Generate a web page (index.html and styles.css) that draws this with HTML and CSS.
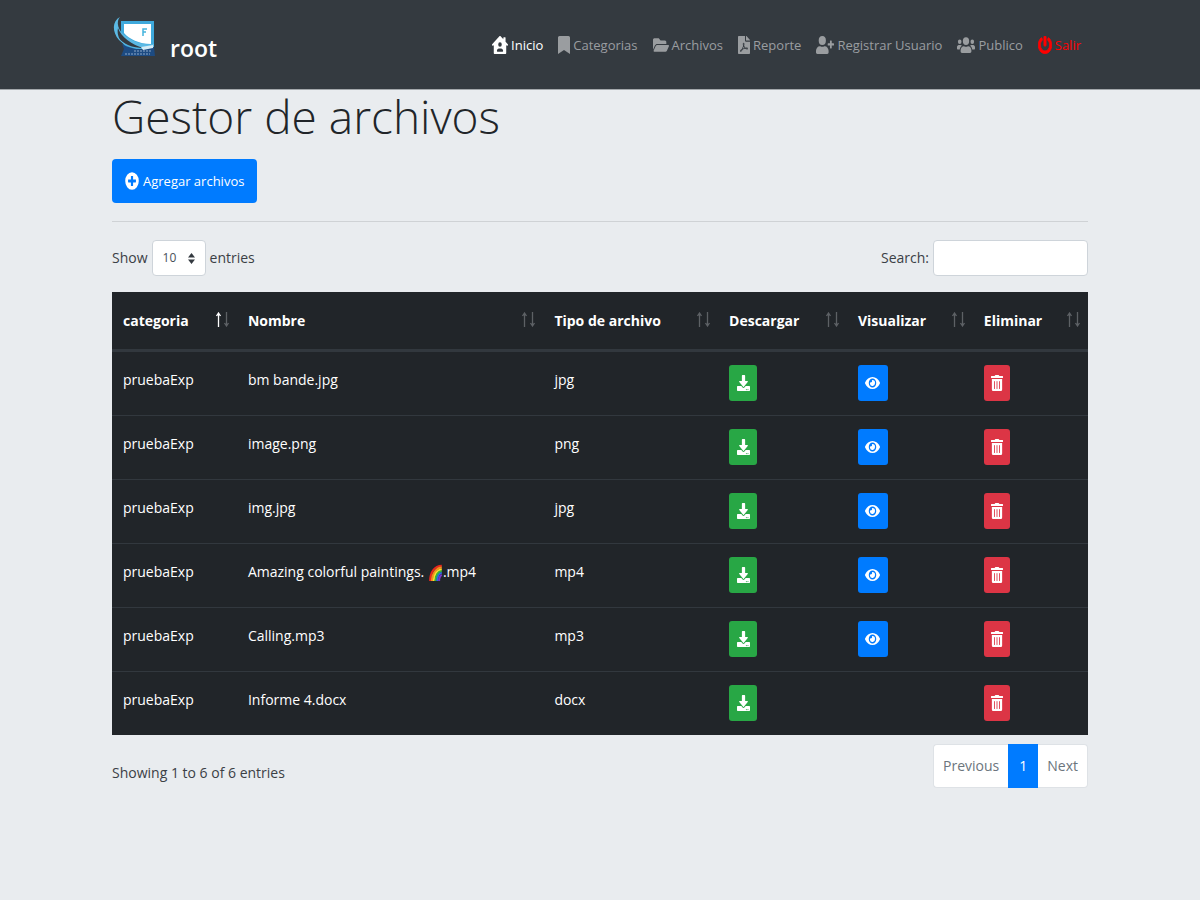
FILE: index.html
```
<!DOCTYPE html>
<html lang="es">
<head>
<meta charset="utf-8">
<title>Gestor de archivos</title>
<link rel="stylesheet" href="styles.css">
</head>
<body>
<svg class="sprite" aria-hidden="true">
  <symbol id="home" viewBox="0 0 576 512" preserveAspectRatio="none"><path fill-rule="evenodd" d="M570 236 488 162V48c0-9-7-16-16-16h-48c-9 0-16 7-16 16v41L310 8c-12-11-32-11-44 0L6 236c-8 8-8 18 0 26l10 12c7 8 18 8 25 1l23-20v225c0 18 14 32 32 32h384c18 0 32-14 32-32V255l23 20c7 7 18 7 25-1l10-12c8-8 8-18 0-26zM288 176a64 64 0 1 1 0 128 64 64 0 0 1 0-128zm90 272H198c-13 0-22-8-22-22 0-42 34-74 74-74h76c40 0 74 32 74 74 0 14-9 22-22 22z"/></symbol>
  <symbol id="bookmark" viewBox="0 0 384 512" preserveAspectRatio="none"><path d="M0 512V48C0 21.500 21.500 0 48 0h288c26.500 0 48 21.500 48 48v464L192 400 0 512z"/></symbol>
  <symbol id="folder" viewBox="0 0 576 512" preserveAspectRatio="none"><path d="M572.700 292.100L500.300 416.200A64 64 0 0 1 445 448H45c-18.500 0-30.100-20.100-20.700-36.100l72.400-124.100A64 64 0 0 1 152 256h400c18.500 0 30.100 20.100 20.700 36.100zM152 224h328v-48c0-26.500-21.500-48-48-48H272l-64-64H48C21.500 64 0 85.500 0 112v278l69.100-118.400C86.200 242.200 118 224 152 224z"/></symbol>
  <symbol id="pdf" viewBox="0 0 384 512" preserveAspectRatio="none"><path fill-rule="evenodd" d="M181.900 256.100c-5-16-4.900-46.900-2-46.900 8.400 0 7.600 36.900 2 46.900zm-1.700 47.200c-7.700 20.200-17.300 43.300-28.400 62.700 18.300-7 39-17.200 62.900-21.900-12.700-9.600-24.900-23.400-34.500-40.800zM86.100 428.100c0 .8 13.200-5.400 34.900-40.200-6.700 6.300-29.100 24.500-34.900 40.200zM248 160h136v328c0 13.300-10.700 24-24 24H24c-13.300 0-24-10.700-24-24V24C0 10.700 10.700 0 24 0h200v136c0 13.200 10.800 24 24 24zm-8 171.800c-20-12.200-33.300-29-42.700-53.800 4.500-18.500 11.600-46.600 6.200-64.200-4.700-29.400-42.400-26.500-47.800-6.800-5 18.300-.4 44.100 8.100 77-11.600 27.600-28.700 64.600-40.800 85.800-.1 0-.1.1-.2.1-27.100 13.900-73.600 44.500-54.500 68 5.600 6.900 16 10 21.500 10 17.900 0 35.700-18 61.100-61.800 25.800-8.500 54.100-19.100 79-23.200 21.700 11.800 47.100 19.500 64 19.500 29.200 0 31.200-32 19.700-43.400-13.900-13.600-54.300-9.700-73.600-7.200zM377 105L279 7c-4.500-4.500-10.600-7-17-7h-6v128h128v-6.100c0-6.300-2.500-12.400-7-16.900zm-74.100 255.300c4.100-2.700-2.500-11.900-42.800-9 37.100 15.800 42.800 9 42.800 9z"/></symbol>
  <symbol id="userplus" viewBox="0 0 640 512" preserveAspectRatio="none"><path d="M624 208h-64v-64c0-8.800-7.200-16-16-16h-32c-8.800 0-16 7.200-16 16v64h-64c-8.800 0-16 7.200-16 16v32c0 8.800 7.200 16 16 16h64v64c0 8.800 7.200 16 16 16h32c8.800 0 16-7.200 16-16v-64h64c8.800 0 16-7.200 16-16v-32c0-8.800-7.200-16-16-16zM224 256a128 128 0 1 0 0-256 128 128 0 0 0 0 256zm89.600 32h-16.700a174 174 0 0 1-145.800 0h-16.700C60.200 288 0 348.200 0 422.400V464c0 26.500 21.500 48 48 48h352c26.500 0 48-21.500 48-48v-41.600c0-74.200-60.200-134.400-134.400-134.400z"/></symbol>
  <symbol id="users" viewBox="0 0 640 512" preserveAspectRatio="none"><path d="M96 224a64 64 0 1 0 0-128 64 64 0 0 0 0 128zm448 0a64 64 0 1 0 0-128 64 64 0 0 0 0 128zm32 32h-64c-17.600 0-33.500 7.100-45.100 18.600 40.300 22.100 68.900 62 75.100 109.400h66c17.700 0 32-14.300 32-32v-32c0-35.300-28.700-64-64-64zm-256 0a112 112 0 1 0 0-224 112 112 0 0 0 0 224zm76.800 32h-8.300a157 157 0 0 1-137 0h-8.300C179.600 288 128 339.600 128 403.200V432c0 26.500 21.500 48 48 48h288c26.500 0 48-21.500 48-48v-28.800c0-63.600-51.600-115.200-115.200-115.200zm-223.700-13.400C161.500 263.100 145.600 256 128 256H64c-35.300 0-64 28.700-64 64v32c0 17.700 14.300 32 32 32h65.900c6.300-47.400 34.900-87.300 75.200-109.400z"/></symbol>
  <symbol id="power" viewBox="0 0 512 512" preserveAspectRatio="none"><path stroke="currentColor" stroke-width="24" d="M400 54.100c63 45 104 118.600 104 201.900 0 136.800-110.800 247.700-247.500 248C120 504.300 8.200 393 8 256.400 7.900 173.100 48.900 99.300 111.800 54.200c11.700-8.300 28-4.800 35 7.700L162.600 90c5.900 10.500 3.100 23.800-6.600 31-41.500 30.800-68 79.600-68 134.900-.1 92.300 74.500 168.100 168 168.100 91.600 0 168.600-74.200 168-169.100-.3-51.800-24.700-101.800-68.100-134-9.700-7.200-12.400-20.500-6.500-30.900l15.800-28.100c7-12.400 23.200-16.100 34.800-7.800zM296 264V24c0-13.300-10.700-24-24-24h-32c-13.300 0-24 10.700-24 24v240c0 13.300 10.700 24 24 24h32c13.300 0 24-10.700 24-24z"/></symbol>
  <symbol id="plus" viewBox="0 0 512 512" preserveAspectRatio="none"><path fill-rule="evenodd" d="M256 8a248 248 0 1 0 0 496 248 248 0 0 0 0-496zm144 276c0 6.600-5.400 12-12 12h-92v92c0 6.600-5.400 12-12 12h-56c-6.600 0-12-5.400-12-12v-92h-92c-6.600 0-12-5.400-12-12v-56c0-6.600 5.400-12 12-12h92v-92c0-6.600 5.400-12 12-12h56c6.600 0 12 5.400 12 12v92h92c6.600 0 12 5.400 12 12v56z"/></symbol>
  <symbol id="download" viewBox="0 0 512 512" preserveAspectRatio="none"><path fill-rule="evenodd" d="M216 0h80c13.300 0 24 10.700 24 24v168h87.700c17.800 0 26.700 21.500 14.100 34.100L269.700 378.300c-7.500 7.500-19.800 7.500-27.300 0L90.100 226.100c-12.600-12.600-3.700-34.100 14.100-34.100H192V24c0-13.300 10.700-24 24-24zm296 376v112c0 13.300-10.700 24-24 24H24c-13.300 0-24-10.700-24-24V376c0-13.300 10.700-24 24-24h146.700l49 49c20.100 20.100 52.500 20.100 72.600 0l49-49H488c13.300 0 24 10.700 24 24zm-124 88c0-11-9-20-20-20s-20 9-20 20 9 20 20 20 20-9 20-20zm64 0c0-11-9-20-20-20s-20 9-20 20 9 20 20 20 20-9 20-20z"/></symbol>
  <symbol id="eye" viewBox="0 0 576 512" preserveAspectRatio="none"><path d="M572.500 241.400C518.300 135.600 410.900 64 288 64S57.700 135.600 3.500 241.400a32.400 32.400 0 0 0 0 29.200C57.700 376.400 165.100 448 288 448s230.300-71.600 284.500-177.400a32.400 32.400 0 0 0 0-29.200zM288 400a144 144 0 1 1 144-144 143.900 143.900 0 0 1-144 144zm0-240a95.300 95.300 0 0 0-25.300 3.800 47.900 47.900 0 0 1-66.900 66.900A95.800 95.800 0 1 0 288 160z"/></symbol>
  <symbol id="trash" viewBox="0 0 448 512" preserveAspectRatio="none"><path fill-rule="evenodd" d="M32 464a48 48 0 0 0 48 48h288a48 48 0 0 0 48-48V128H32zm272-256a16 16 0 0 1 32 0v224a16 16 0 0 1-32 0zm-96 0a16 16 0 0 1 32 0v224a16 16 0 0 1-32 0zm-96 0a16 16 0 0 1 32 0v224a16 16 0 0 1-32 0zM432 32H312l-9.400-18.700A24 24 0 0 0 281.100 0H166.800a23.700 23.700 0 0 0-21.400 13.300L136 32H16A16 16 0 0 0 0 48v32a16 16 0 0 0 16 16h416a16 16 0 0 0 16-16V48a16 16 0 0 0-16-16z"/></symbol>
  <symbol id="up" viewBox="0 0 6 15"><path d="M3 15V2M1 4l2-3 2 3" fill="none" stroke="currentColor" stroke-width="1.300"/></symbol>
  <symbol id="down" viewBox="0 0 6 15"><path d="M3 0v13M1 11l2 3 2-3" fill="none" stroke="currentColor" stroke-width="1.300"/></symbol>
</svg>

<nav class="navbar">
  <a class="brand" href="#">
    <svg class="logo" viewBox="0 0 44 44" aria-hidden="true">
      <path d="M9 5h33v25l-7 3H15L9 25z" fill="#3fa9dc"/>
      <path d="M12 8h27v20C27 28 17 23 12 17z" fill="#fff"/>
      <path d="M31 20V13h4M31 16h3" fill="none" stroke="#45b4dd" stroke-width="1.500"/>
      <path d="M8 1C4 5 5 15 15 21c8 6 18 8 27 7v3C30 35 15 32 7 24 0 16 0 5 8 1z" fill="#5bb9e4"/>
      <path d="M6 12c3 9 14 17 26 20-12 0-21-4-25-10-1-3-2-6-1-10z" fill="#343a40"/>
      <path d="M10 28c7 4 15 6 24 5l8-2 1 9H9l3-7z" fill="#1d4b82"/>
      <path d="M29 31l12-2v3l-10 2z" fill="#d5ecf7"/>
      <path d="M22 35h17M13 38h25" stroke="#8ea9c8" stroke-dasharray="2 1"/>
    </svg>
    <span>root</span>
  </a>
  <ul class="menu">
    <li><a class="active" href="#"><svg class="i16"><use href="#home"/></svg>Inicio</a></li>
    <li><a href="#"><svg class="i12"><use href="#bookmark"/></svg>Categorias</a></li>
    <li><a href="#"><svg class="i16"><use href="#folder"/></svg>Archivos</a></li>
    <li><a href="#"><svg class="i12"><use href="#pdf"/></svg>Reporte</a></li>
    <li><a href="#"><svg class="i18"><use href="#userplus"/></svg>Registrar Usuario</a></li>
    <li><a href="#"><svg class="i18"><use href="#users"/></svg>Publico</a></li>
    <li><a class="exit" href="#"><svg class="i14"><use href="#power"/></svg>Salir</a></li>
  </ul>
</nav>

<main class="container">
  <h1>Gestor de archivos</h1>
  <button class="add" type="button"><svg class="i14"><use href="#plus"/></svg>Agregar archivos</button>
  <hr>
  <div class="tools">
    <label class="length">Show <select><option>10</option><option>25</option></select> entries</label>
    <label class="search">Search: <input type="search"></label>
  </div>
  <table>
    <colgroup><col class="c1"><col class="c2"><col class="c3"><col class="c4"><col class="c5"><col class="c6"></colgroup>
    <thead>
      <tr>
        <th class="sorted"><div>categoria<span class="sort"><svg><use href="#up"/></svg><svg><use href="#down"/></svg></span></div></th>
        <th><div>Nombre<span class="sort"><svg><use href="#up"/></svg><svg><use href="#down"/></svg></span></div></th>
        <th><div>Tipo de archivo<span class="sort"><svg><use href="#up"/></svg><svg><use href="#down"/></svg></span></div></th>
        <th><div>Descargar<span class="sort"><svg><use href="#up"/></svg><svg><use href="#down"/></svg></span></div></th>
        <th><div>Visualizar<span class="sort"><svg><use href="#up"/></svg><svg><use href="#down"/></svg></span></div></th>
        <th><div>Eliminar<span class="sort"><svg><use href="#up"/></svg><svg><use href="#down"/></svg></span></div></th>
      </tr>
    </thead>
    <tbody>
      <tr><td>pruebaExp</td><td>bm bande.jpg</td><td>jpg</td>
        <td><a class="act get" href="#" aria-label="Descargar"><svg><use href="#download"/></svg></a></td>
        <td><button class="act view" aria-label="Visualizar"><svg><use href="#eye"/></svg></button></td>
        <td><button class="act del" aria-label="Eliminar"><svg><use href="#trash"/></svg></button></td></tr>
      <tr><td>pruebaExp</td><td>image.png</td><td>png</td>
        <td><a class="act get" href="#" aria-label="Descargar"><svg><use href="#download"/></svg></a></td>
        <td><button class="act view" aria-label="Visualizar"><svg><use href="#eye"/></svg></button></td>
        <td><button class="act del" aria-label="Eliminar"><svg><use href="#trash"/></svg></button></td></tr>
      <tr><td>pruebaExp</td><td>img.jpg</td><td>jpg</td>
        <td><a class="act get" href="#" aria-label="Descargar"><svg><use href="#download"/></svg></a></td>
        <td><button class="act view" aria-label="Visualizar"><svg><use href="#eye"/></svg></button></td>
        <td><button class="act del" aria-label="Eliminar"><svg><use href="#trash"/></svg></button></td></tr>
      <tr><td>pruebaExp</td><td>Amazing colorful paintings. <svg class="rainbow" viewBox="0 0 16 20" role="img" aria-label="arcoíris">
          <g fill="none" stroke-width="2.200"><path d="M2 19C2 9 7 2 15 2" stroke="#e8281e"/><path d="M4 19C4 11 9 4 15 4" stroke="#f98a1c"/><path d="M6 19c0-7 4-13 9-13" stroke="#f9e02c"/><path d="M8 19c0-6 3-11 7-11" stroke="#34b83d"/><path d="M10 19c0-5 2-9 5-9" stroke="#2b6de8"/><path d="M12 19c0-4 1-6 3-7" stroke="#7b35c8"/></g></svg>.mp4</td><td>mp4</td>
        <td><a class="act get" href="#" aria-label="Descargar"><svg><use href="#download"/></svg></a></td>
        <td><button class="act view" aria-label="Visualizar"><svg><use href="#eye"/></svg></button></td>
        <td><button class="act del" aria-label="Eliminar"><svg><use href="#trash"/></svg></button></td></tr>
      <tr><td>pruebaExp</td><td>Calling.mp3</td><td>mp3</td>
        <td><a class="act get" href="#" aria-label="Descargar"><svg><use href="#download"/></svg></a></td>
        <td><button class="act view" aria-label="Visualizar"><svg><use href="#eye"/></svg></button></td>
        <td><button class="act del" aria-label="Eliminar"><svg><use href="#trash"/></svg></button></td></tr>
      <tr><td>pruebaExp</td><td>Informe 4.docx</td><td>docx</td>
        <td><a class="act get" href="#" aria-label="Descargar"><svg><use href="#download"/></svg></a></td>
        <td></td>
        <td><button class="act del" aria-label="Eliminar"><svg><use href="#trash"/></svg></button></td></tr>
    </tbody>
  </table>
  <div class="foot">
    <p>Showing 1 to 6 of 6 entries</p>
    <div class="pages"><a href="#">Previous</a><a class="current" href="#">1</a><a href="#">Next</a></div>
  </div>
</main>
</body>
</html>
```
FILE: styles.css
```
* { box-sizing: border-box; }
body {
  margin: 0;
  background: #e9ecef;
  color: #212529;
  font: 14px/24px "Open Sans", "Noto Sans", sans-serif;
}
svg { fill: currentColor; flex: none; }
.sprite { position: absolute; width: 0; height: 0; }
a { text-decoration: none; }

.navbar {
  display: flex;
  align-items: center;
  justify-content: space-between;
  padding: 0 119px 0 112px;
  min-height: 90px;
  background: #343a40;
  border-bottom: 1px solid #a3a7ab;
}
.brand {
  display: flex;
  align-items: flex-end;
  gap: 14px;
  padding-bottom: 14px;
  color: #fff;
  font-size: 23px;
  font-weight: 600;
  line-height: 24px;
}
.brand .logo { width: 44px; height: 44px; }
.menu { display: flex; gap: 15px; margin: 0; padding: 0; list-style: none; }
.menu a {
  display: flex;
  align-items: center;
  gap: 3px;
  color: #9a9da0;
  font-size: 13px;
  white-space: nowrap;
}
.menu .active { color: #fff; }
.menu .exit { color: #f00; }
.menu svg, .add svg { height: 18px; }
.i12 { width: 12px; }
.i14 { width: 14px; }
.i16 { width: 16px; }
.i18 { width: 18px; }

.container { padding: 0 112px; }
h1 {
  margin: 0 0 17px;
  font-size: 46px;
  font-weight: 300;
  line-height: 52px;
}
.add {
  display: flex;
  align-items: center;
  gap: 4px;
  height: 44px;
  padding: 0 13px;
  border: 0;
  border-radius: 4px;
  background: #007bff;
  color: #fff;
  font: inherit;
  font-size: 13px;
}
hr { margin: 18px 0; border: 0; border-top: 1px solid #cfd2d5; }

.tools { display: flex; justify-content: space-between; margin-bottom: 16px; }
.tools label { display: flex; align-items: center; gap: 4px; color: #3b4045; }
.tools select, .tools input {
  height: 36px;
  border: 1px solid #ced4da;
  border-radius: 4px;
  background-color: #fff;
  color: #495057;
  font: inherit;
}
.tools select {
  width: 54px;
  padding: 0 10px;
  appearance: none;
  font-size: 12px;
  background-image: url("data:image/svg+xml,%3csvg xmlns='http://www.w3.org/2000/svg' viewBox='0 0 4 5' preserveAspectRatio='none'%3e%3cpath fill='%23343a40' d='M2 0L0 2h4zm0 5L0 3h4z'/%3e%3c/svg%3e");
  background-repeat: no-repeat;
  background-position: right 10px center;
  background-size: 7px 11px;
}
.tools input { width: 155px; padding: 0 8px; }

table {
  width: 100%;
  table-layout: fixed;
  border-collapse: separate;
  border-spacing: 0;
  background: #212529;
  color: #fff;
}
.c1 { width: 12.8%; }
.c2 { width: 31.4%; }
.c3 { width: 17.9%; }
.c4 { width: 13.2%; }
.c5 { width: 12.9%; }
.c6 { width: 11.8%; }
th {
  padding: 15px 7px 14px 11px;
  border-bottom: 3px solid #32383e;
  font-size: 14px;
  font-weight: 700;
  line-height: 28px;
  text-align: left;
}
th div { display: flex; justify-content: space-between; align-items: center; white-space: nowrap; }
.sort { display: flex; gap: 1px; margin-bottom: 4px; color: #5d6165; }
.sort svg { width: 7px; height: 15px; }
.sorted svg:first-child { color: #fff; }
td {
  height: 64px;
  padding: 13px 11px 14px;
  border-bottom: 1px solid #32383e;
  line-height: 30px;
  vertical-align: top;
  white-space: nowrap;
}
tbody tr:last-child td { height: 63px; border-bottom: 0; }
.rainbow { width: 15px; height: 18px; vertical-align: middle; }
.act {
  display: flex;
  align-items: center;
  justify-content: center;
  height: 36px;
  padding: 0;
  border: 0;
  border-radius: 3px;
  color: #fff;
}
.act svg { height: 16px; }
.get { width: 28px; background: #28a745; }
.get svg { width: 13px; }
.view { width: 30px; background: #007bff; }
.view svg { width: 15px; }
.del { width: 26px; background: #dc3545; }
.del svg { width: 12px; }

.foot { display: flex; justify-content: space-between; margin-top: 9px; }
.foot p { margin: 17px 0 0; color: #3b4045; }
.pages { display: flex; line-height: 42px; }
.pages a {
  padding: 0 9px;
  border: 1px solid #dee2e6;
  background: #fff;
  color: #6c757d;
}
.pages a:first-child { border-radius: 4px 0 0 4px; border-right: 0; }
.pages a:last-child { border-radius: 0 4px 4px 0; border-left: 0; }
.pages .current { padding: 0 10px; border-color: #007bff; background: #007bff; color: #fff; }
```
